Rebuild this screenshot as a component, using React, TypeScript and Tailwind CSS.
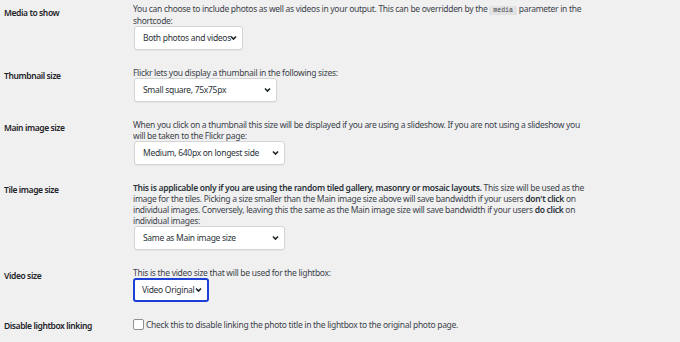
import { ReactNode } from 'react'

function Chevron() {
  return (
    <svg
      className="absolute right-[5px] top-1/2 -translate-y-1/2"
      width="7"
      height="5"
      viewBox="0 0 7 5"
      fill="none"
    >
      <polyline points="1,1 3.5,3.5 6,1" stroke="#1d2327" strokeWidth="1.6" />
    </svg>
  )
}

function Select({ value, width, focused }: { value: string; width: string; focused?: boolean }) {
  return (
    <div
      className={
        focused
          ? `relative flex h-[24px] ${width} items-center rounded-[3px] border-2 border-[#1c3fd6] bg-white pl-[7px] pr-[13px] text-[#2c3338]`
          : `relative ml-[1px] flex h-[24px] ${width} items-center rounded-[3px] border border-[#d4d4d4] bg-white pl-[8px] pr-[13px] text-[#2c3338] shadow-[0_1px_1px_rgba(0,0,0,0.04)]`
      }
    >
      <span className="whitespace-nowrap">{value}</span>
      <Chevron />
    </div>
  )
}

function Row({ label, children, labelPad = 'pt-[3.5px]' }: { label: string; children: ReactNode; labelPad?: string }) {
  return (
    <div className="grid grid-cols-[133px_1fr] pb-[17px]">
      <div className={`${labelPad} pl-[4px] font-semibold tracking-[-0.4px] text-[#1d2327]`}>{label}</div>
      <div>{children}</div>
    </div>
  )
}

export default function App() {
  return (
    <div
      className="h-[342px] w-[680px] overflow-hidden bg-[#f0f0f1] pt-[3px] text-[8.5px] leading-[11px] tracking-[-0.3px] text-[#3c434a]"
      style={{ fontFamily: '"Noto Sans", "Open Sans", sans-serif' }}
    >
      <Row label="Media to show">
        <p className="whitespace-nowrap">
          You can choose to include photos as well as videos in your output. This can be overridden by the{' '}
          <code
            className="rounded-[1px] bg-[#e2e2e3] px-[4px] py-[1px] text-[6.5px] leading-none tracking-normal text-[#3c434a]"
            style={{ fontFamily: '"Liberation Mono", monospace' }}
          >
            media
          </code>{' '}
          parameter in the
          <br />
          shortcode:
        </p>
        <Select value="Both photos and videos" width="w-[109px]" />
      </Row>

      <Row label="Thumbnail size">
        <p className="whitespace-nowrap">Flickr lets you display a thumbnail in the following sizes:</p>
        <Select value="Small square, 75x75px" width="w-[143px]" />
      </Row>

      <Row label="Main image size">
        <p className="whitespace-nowrap">
          When you click on a thumbnail this size will be displayed if you are using a slideshow. If you are not using a slideshow you
          <br />
          will be taken to the Flickr page:
        </p>
        <Select value="Medium, 640px on longest side" width="w-[151px]" />
      </Row>

      <Row label="Tile image size" labelPad="pt-[2px]">
        <p className="whitespace-nowrap">
          <b className="font-semibold text-[#2c3338]">
            This is applicable only if you are using the random tiled gallery, masonry or mosaic layouts.
          </b>{' '}
          This size will be used as the
          <br />
          image for the tiles. Picking a size smaller than the Main image size above will save bandwidth if your users{' '}
          <b className="font-semibold text-[#2c3338]">don&apos;t click</b> on
          <br />
          individual images. Conversely, leaving this the same as the Main image size will save bandwidth if your users{' '}
          <b className="font-semibold text-[#2c3338]">do click</b> on
          <br />
          individual images:
        </p>
        <Select value="Same as Main image size" width="w-[151px]" />
      </Row>

      <Row label="Video size">
        <p className="whitespace-nowrap">This is the video size that will be used for the lightbox:</p>
        <Select value="Video Original" width="w-[76px]" focused />
      </Row>

      <Row label="Disable lightbox linking" labelPad="pt-[1px]">
        <label className="flex items-center gap-[2px] whitespace-nowrap pt-[0.5px]">
          <span className="h-[11px] w-[11px] rounded-[2px] border border-[#8c8f94] bg-white" />
          Check this to disable linking the photo title in the lightbox to the original photo page.
        </label>
      </Row>
    </div>
  )
}
